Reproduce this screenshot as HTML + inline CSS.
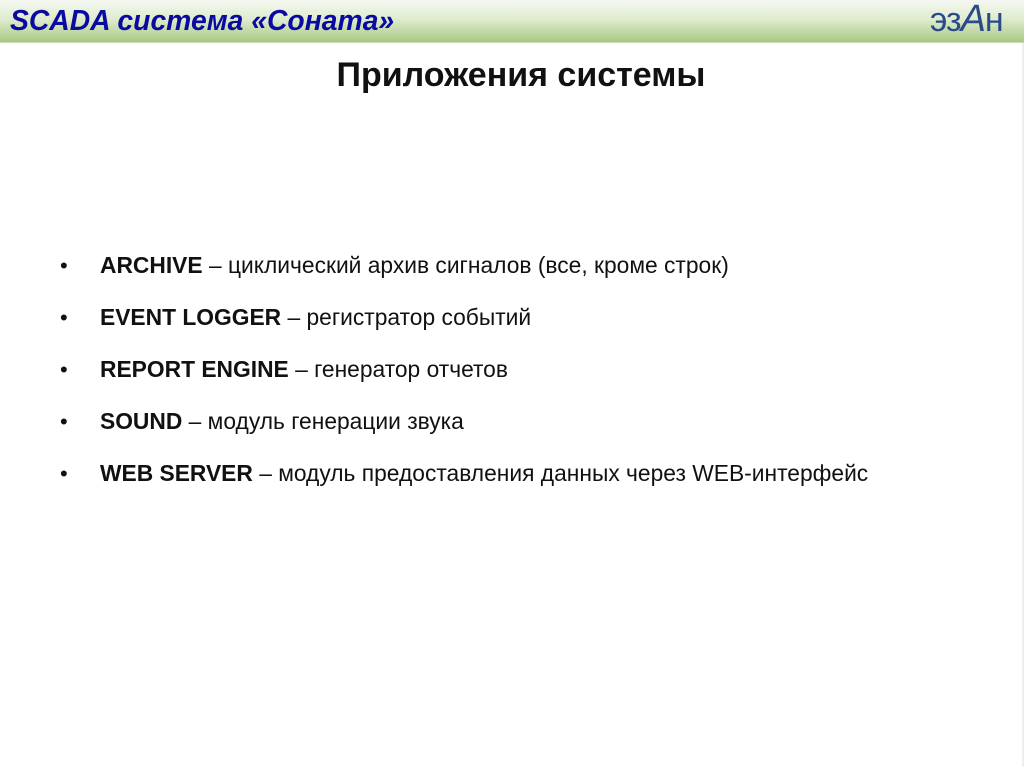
<!DOCTYPE html>
<html><head><meta charset="utf-8"><style>
body{margin:0;width:1024px;height:767px;background:#fff;position:relative;overflow:hidden;font-family:"Liberation Sans",sans-serif}
.hdr{position:absolute;left:0;top:0;width:1024px;height:42px;background:linear-gradient(#f6f8f2 0%,#dfeccf 45%,#a9c982 100%);border-bottom:1px solid #c8d8b8}
.ht{position:absolute;left:10px;top:4px;font-size:28.3px;font-weight:bold;font-style:italic;color:#0a0aa0}
.logo{position:absolute;left:930px;top:-2px;font-size:34px;color:#2a4a8a;font-family:"Liberation Sans",sans-serif;letter-spacing:-1px}
h1{position:absolute;left:0;width:1042px;text-align:center;top:56px;margin:0;font-size:34px;font-weight:bold;color:#111}
.edge{position:absolute;right:0;top:43px;width:2px;height:724px;background:#eee}
ul{position:absolute;left:60px;top:252px;margin:0;padding:0;list-style:none}
li{font-size:22.8px;color:#111;height:52px;position:relative;padding-left:40px}
li:before{content:"•";position:absolute;left:0;top:1px;font-size:22px}
</style></head><body>
<div class="hdr"><div class="ht">SCADA система «Соната»</div><div class="logo">эз<i style="font-size:38px">А</i>н</div></div>
<div class="edge"></div>
<h1>Приложения системы</h1>
<ul>
<li><b>ARCHIVE</b> – циклический архив сигналов (все, кроме строк)</li>
<li><b>EVENT LOGGER</b> – регистратор событий</li>
<li><b>REPORT ENGINE</b> – генератор отчетов</li>
<li><b>SOUND</b> – модуль генерации звука</li>
<li><b>WEB SERVER</b> – модуль предоставления данных через WEB-интерфейс</li>
</ul>
</body></html>
